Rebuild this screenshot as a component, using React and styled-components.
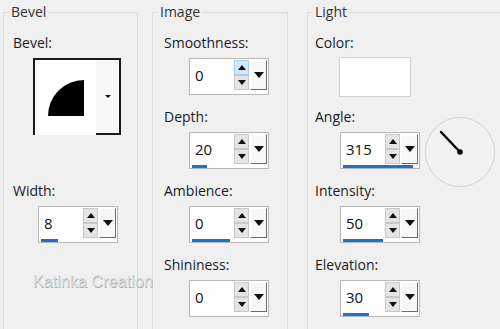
import React from "react";
import styled, { createGlobalStyle } from "styled-components";

const GlobalStyle = createGlobalStyle`
  html, body {
    margin: 0;
    padding: 0;
    background: #f0f0f0;
    overflow: hidden;
  }
  body {
    font-family: "Open Sans", "Noto Sans", sans-serif;
  }
`;

const Page = styled.div`
  position: relative;
  display: flex;
  width: 500px;
  height: 329px;
  padding-left: 3px;
  box-sizing: border-box;
  overflow: hidden;
`;

const Group = styled.fieldset`
  flex: none;
  width: ${(p) => p.$width}px;
  height: 360px;
  margin: 2px 0 0 ${(p) => p.$gap || 0}px;
  padding: 0;
  border: 1px solid #dcdcdc;
  box-sizing: border-box;
  min-width: 0;
`;

const Title = styled.legend`
  margin-left: 5px;
  padding: 0 2px;
  font-size: 14px;
  line-height: 20px;
  color: #333;
`;

const GroupBody = styled.div`
  padding: 11px 0 0 ${(p) => p.$pad}px;
`;

const Label = styled.div`
  height: 20px;
  line-height: 20px;
  font-size: 14px;
  color: #1b1b1b;
  margin-bottom: 5px;
`;

const Slot = styled.div`
  display: flex;
  align-items: flex-start;
  height: ${(p) => p.$height || 37}px;
  margin-left: ${(p) => p.$indent ?? 25}px;
  margin-bottom: 12px;
`;

const SpinBox = styled.div`
  display: flex;
  flex-direction: column;
  width: 80px;
  height: 37px;
  padding: 1px 1px 0;
  box-sizing: border-box;
  border: 1px solid #b7b7b7;
  background: #fff;
`;

const SpinRow = styled.div`
  display: flex;
  height: 30px;
`;

const Value = styled.div`
  flex: 1;
  padding-left: 4px;
  font-size: 15px;
  line-height: 30px;
  color: #111;
`;

const Steppers = styled.div`
  display: flex;
  flex-direction: column;
  width: 15px;
`;

const Step = styled.div`
  display: flex;
  align-items: center;
  justify-content: center;
  height: 15px;
  box-sizing: border-box;
  border: 1px solid ${(p) => (p.$hot ? "#a8cdee" : "#c8c8c8")};
  background: ${(p) => (p.$hot ? "#d6e8f8" : "#e5e5e5")};
`;

const Arrow = styled.span`
  width: 0;
  height: 0;
  border-left: ${(p) => p.$w}px solid transparent;
  border-right: ${(p) => p.$w}px solid transparent;
  ${(p) =>
    p.$up
      ? `border-bottom: ${p.$h}px solid #111;`
      : `border-top: ${p.$h}px solid #111;`}
`;

const Drop = styled.div`
  display: flex;
  align-items: center;
  justify-content: center;
  width: 17px;
  margin-left: 1px;
  box-sizing: border-box;
  background: #f7f7f7;
  border-top: 1px solid #fff;
  border-left: 1px solid #fff;
  border-right: 1px solid #6c6c6c;
  border-bottom: 1px solid #6c6c6c;
`;

const Track = styled.div`
  display: flex;
  align-items: center;
  height: 5px;
`;

const Fill = styled.div`
  height: 3px;
  margin-left: 1px;
  background: #1b72d0;
`;

const BevelPicker = styled.div`
  display: flex;
  width: 88px;
  height: 77px;
  box-sizing: border-box;
  border-top: 2px solid #1a1a1a;
  border-left: 2px solid #1a1a1a;
`;

const BevelCanvas = styled.div`
  display: flex;
  align-items: center;
  justify-content: center;
  width: 61px;
  background: #fff;
`;

const BevelDrop = styled.div`
  display: flex;
  align-items: center;
  justify-content: center;
  flex: 1;
  background: #f8f8f8;
  border-right: 2px solid #1a1a1a;
  border-bottom: 2px solid #1a1a1a;
`;

const Swatch = styled.div`
  width: 72px;
  height: 40px;
  margin-top: -1px;
  box-sizing: border-box;
  border: 1px solid #d2d2d2;
  background: #fff;
`;

const Dial = styled.svg`
  flex: none;
  margin: -16px 0 0 4px;
`;

const Watermark = styled.div`
  position: absolute;
  left: 33px;
  top: 273px;
  font-family: "Liberation Sans", Arial, sans-serif;
  font-size: 16px;
  letter-spacing: 0.1px;
  color: #dedede;
  text-shadow: 0.5px 0.5px 0 #a9a9a9;
  pointer-events: none;
`;

const Spin = ({ value, bar = 0, hot }) => (
  <SpinBox>
    <SpinRow>
      <Value>{value}</Value>
      <Steppers>
        <Step $hot={hot}>
          <Arrow $up $w={4} $h={5} />
        </Step>
        <Step>
          <Arrow $w={4} $h={5} />
        </Step>
      </Steppers>
      <Drop>
        <Arrow $w={5} $h={6} />
      </Drop>
    </SpinRow>
    <Track>{bar > 0 && <Fill style={{ width: bar }} />}</Track>
  </SpinBox>
);

const App = () => (
  <Page>
    <GlobalStyle />
    <Group $width={135}>
      <Title>Bevel</Title>
      <GroupBody $pad={9}>
        <Label>Bevel:</Label>
        <Slot $indent={20} $height={111}>
          <BevelPicker>
            <BevelCanvas>
              <svg width="36" height="36" viewBox="0 0 36 36">
                <path d="M0 36 A36 36 0 0 1 36 0 L36 36 Z" fill="#000" />
              </svg>
            </BevelCanvas>
            <BevelDrop>
              <Arrow $w={3} $h={3} />
            </BevelDrop>
          </BevelPicker>
        </Slot>
        <Label>Width:</Label>
        <Slot>
          <Spin value="8" bar={17} />
        </Slot>
      </GroupBody>
    </Group>

    <Group $width={136} $gap={14}>
      <Title>Image</Title>
      <GroupBody $pad={11}>
        <Label>Smoothness:</Label>
        <Slot>
          <Spin value="0" hot />
        </Slot>
        <Label>Depth:</Label>
        <Slot>
          <Spin value="20" bar={15} />
        </Slot>
        <Label>Ambience:</Label>
        <Slot>
          <Spin value="0" bar={38} />
        </Slot>
        <Label>Shininess:</Label>
        <Slot>
          <Spin value="0" />
        </Slot>
      </GroupBody>
    </Group>

    <Group $width={220} $gap={19}>
      <Title>Light</Title>
      <GroupBody $pad={7}>
        <Label>Color:</Label>
        <Slot $indent={24}>
          <Swatch />
        </Slot>
        <Label>Angle:</Label>
        <Slot>
          <Spin value="315" bar={70} />
          <Dial width="72" height="72" viewBox="0 0 72 72">
            <circle cx="36" cy="36" r="34.5" fill="#f2f2f2" stroke="#d2d2d2" strokeWidth="1" />
            <line x1="36" y1="36" x2="17" y2="16" stroke="#000" strokeWidth="2.4" strokeLinecap="round" />
            <circle cx="36" cy="36" r="2.8" fill="#000" />
          </Dial>
        </Slot>
        <Label>Intensity:</Label>
        <Slot>
          <Spin value="50" bar={40} />
        </Slot>
        <Label>Elevation:</Label>
        <Slot>
          <Spin value="30" bar={26} />
        </Slot>
      </GroupBody>
    </Group>

    <Watermark>Katinka Creation</Watermark>
  </Page>
);

export default App;
